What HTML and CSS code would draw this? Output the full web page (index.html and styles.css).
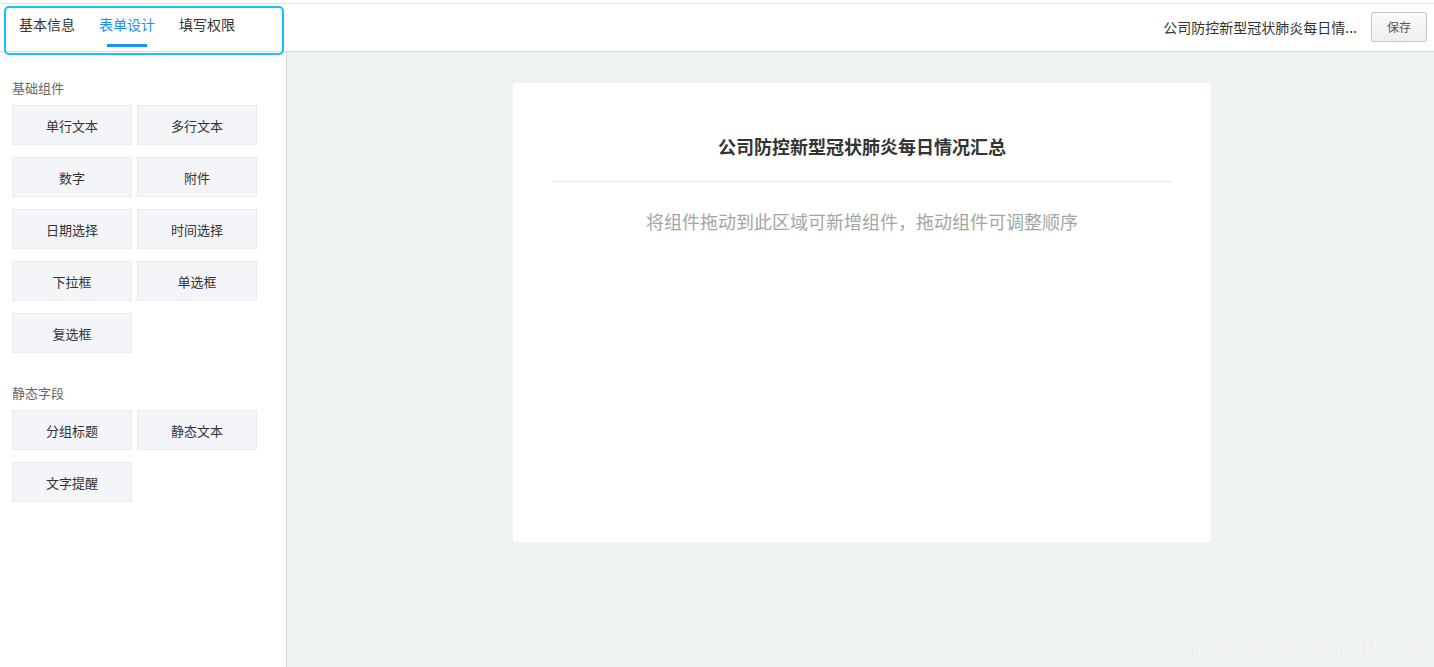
FILE: index.html
```html
<!DOCTYPE html>
<html lang="zh-CN">
<head>
<meta charset="utf-8">
<title>表单设计</title>
<link rel="stylesheet" href="styles.css">
</head>
<body>
<div class="page">
  <header class="header">
    <nav class="tabs">
      <span class="tab">基本信息</span>
      <span class="tab active">表单设计</span>
      <span class="tab">填写权限</span>
    </nav>
    <div class="header-right">
      <span class="form-name" title="公司防控新型冠状肺炎每日情况汇总">公司防控新型冠状肺炎每日情...</span>
      <button class="save-btn">保存</button>
    </div>
    <div class="highlight"></div>
  </header>
  <div class="body">
    <aside class="sidebar">
      <div class="group">
        <div class="group-title">基础组件</div>
        <div class="items">
          <div class="item">单行文本</div>
          <div class="item">多行文本</div>
          <div class="item">数字</div>
          <div class="item">附件</div>
          <div class="item">日期选择</div>
          <div class="item">时间选择</div>
          <div class="item">下拉框</div>
          <div class="item">单选框</div>
          <div class="item">复选框</div>
        </div>
      </div>
      <div class="group">
        <div class="group-title">静态字段</div>
        <div class="items">
          <div class="item">分组标题</div>
          <div class="item">静态文本</div>
          <div class="item">文字提醒</div>
        </div>
      </div>
    </aside>
    <main class="main">
      <section class="card">
        <h1 class="card-title">公司防控新型冠状肺炎每日情况汇总</h1>
        <div class="divider"></div>
        <p class="placeholder">将组件拖动到此区域可新增组件，拖动组件可调整顺序</p>
      </section>
      <div class="watermark">https://blog.csdn.net/qq_41137493</div>
    </main>
  </div>
</div>
</body>
</html>
```
FILE: styles.css
```css
* { box-sizing: border-box; }
html, body {
  margin: 0;
  padding: 0;
  height: 100%;
}
body {
  font-family: "Noto Sans CJK SC", "Noto Sans", sans-serif;
  color: #333;
  background: #fff;
}
.page {
  height: 667px;
  display: flex;
  flex-direction: column;
  padding-top: 3px;
}
.header {
  position: relative;
  height: 49px;
  flex: none;
  border-top: 1px solid #e3e3e3;
  border-bottom: 1px solid #dcdcdc;
  display: flex;
  align-items: stretch;
  justify-content: space-between;
  background: #fff;
}
.tabs {
  display: flex;
  padding-left: 19px;
  gap: 24px;
}
.tab {
  position: relative;
  font-size: 14px;
  line-height: 20px;
  padding-top: 10px;
  color: #333;
}
.tab.active { color: #1890ff; }
.tab.active::after {
  content: "";
  position: absolute;
  left: 8px;
  right: 8px;
  top: 40px;
  height: 3px;
  background: #1890ff;
}
.highlight {
  position: absolute;
  left: 4px;
  top: 2px;
  width: 280px;
  height: 49px;
  border: 2px solid #16c2f8;
  border-radius: 5px;
  pointer-events: none;
}
.header-right {
  display: flex;
  align-items: center;
  gap: 14px;
  padding-right: 7px;
  padding-bottom: 2px;
}
.form-name {
  font-size: 14px;
  color: #333;
  white-space: nowrap;
}
.save-btn {
  width: 56px;
  height: 30px;
  font-family: inherit;
  font-size: 12px;
  color: #555;
  background: linear-gradient(#fafafa, #efefef);
  border: 1px solid #c6c6c6;
  border-radius: 2px;
  padding: 0;
}
.body {
  flex: 1;
  display: flex;
  min-height: 0;
}
.sidebar {
  width: 287px;
  flex: none;
  border-right: 1px solid #d2d2d2;
  padding: 27px 0 0 12px;
  display: flex;
  flex-direction: column;
  gap: 31px;
}
.group-title {
  font-size: 13px;
  color: #666;
  line-height: 18px;
  margin-bottom: 8px;
}
.items {
  display: grid;
  grid-template-columns: 120px 120px;
  column-gap: 5px;
  row-gap: 12px;
}
.item {
  height: 40px;
  display: flex;
  align-items: center;
  justify-content: center;
  font-size: 13px;
  color: #333;
  background: #f4f5f9;
  border: 1px solid #ebebeb;
}
.main {
  position: relative;
  flex: 1;
  background: #eff2f3;
  padding-top: 31px;
  display: flex;
  justify-content: center;
}
.card {
  width: 698px;
  height: 459px;
  margin-left: 3px;
  background: #fff;
  border-radius: 3px;
  padding: 0 40px;
  text-align: center;
}
.card-title {
  margin: 0;
  padding-top: 50px;
  font-size: 18px;
  line-height: 26px;
  font-weight: 600;
  color: #333;
}
.divider {
  margin-top: 22px;
  height: 1px;
  background: #e8e8e8;
}
.placeholder {
  margin: 26px 0 0;
  font-size: 18px;
  line-height: 26px;
  color: #a5a5a5;
}
.watermark {
  position: absolute;
  right: 10px;
  bottom: 10px;
  font-family: "Liberation Sans", Arial, sans-serif;
  font-size: 16px;
  color: #f8f9f9;
  text-shadow: 0 0 1px #e2e5e6;
}
```
